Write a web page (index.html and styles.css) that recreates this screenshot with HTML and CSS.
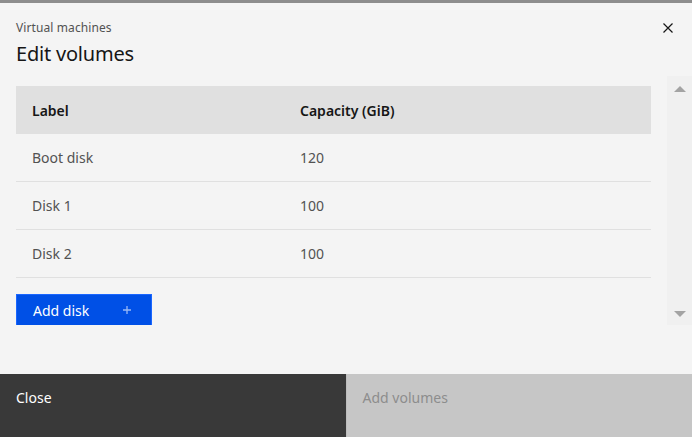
FILE: index.html
```html
<!DOCTYPE html>
<html lang="en">
<head>
<meta charset="utf-8">
<title>Edit volumes</title>
<link rel="stylesheet" href="styles.css">
</head>
<body>
<div class="modal">
  <div class="topbar"></div>
  <header class="modal-header">
    <div class="modal-label">Virtual machines</div>
    <h2 class="modal-title">Edit volumes</h2>
    <button class="close-btn" aria-label="Close">
      <svg width="16" height="16" viewBox="0 0 16 16"><path d="M3.5 3.5 L12.5 12.5 M12.5 3.5 L3.5 12.5" stroke="#161616" stroke-width="1.2" fill="none"/></svg>
    </button>
  </header>
  <div class="modal-body">
    <div class="content">
      <div class="table">
        <div class="row head"><div class="cell">Label</div><div class="cell">Capacity (GiB)</div></div>
        <div class="row"><div class="cell">Boot disk</div><div class="cell">120</div></div>
        <div class="row"><div class="cell">Disk 1</div><div class="cell">100</div></div>
        <div class="row"><div class="cell">Disk 2</div><div class="cell">100</div></div>
      </div>
      <button class="add-btn"><span>Add disk</span>
        <svg width="16" height="16" viewBox="0 0 16 16"><path d="M8 4 V12 M4 8 H12" stroke="#ffffff" stroke-opacity="0.6" stroke-width="1.3" fill="none"/></svg>
      </button>
    </div>
    <div class="scrollbar">
      <span class="arrow up"></span>
      <span class="arrow down"></span>
    </div>
  </div>
  <footer class="modal-footer">
    <button class="btn secondary">Close</button>
    <button class="btn disabled">Add volumes</button>
  </footer>
</div>
</body>
</html>
```
FILE: styles.css
```css
* { box-sizing: border-box; }
html, body { margin: 0; padding: 0; }
body {
  font-family: "Noto Sans", "Open Sans", sans-serif;
  background: #f4f4f4;
  color: #161616;
}
.modal {
  width: 692px;
  height: 437px;
  display: flex;
  flex-direction: column;
  background: #f4f4f4;
}
.topbar { height: 3px; background: #8d8d8d; flex: none; }
.modal-header {
  position: relative;
  padding: 17px 16px 0 16px;
  height: 73px;
  flex: none;
}
.modal-label {
  font-size: 12px;
  line-height: 16px;
  color: #525252;
  letter-spacing: 0.1px;
}
.modal-title {
  margin: 4px 0 0 0;
  font-size: 20px;
  line-height: 28px;
  font-weight: 400;
  letter-spacing: -0.2px;
  color: #161616;
}
.close-btn {
  position: absolute;
  right: 16px;
  top: 17px;
  width: 16px;
  height: 16px;
  border: none;
  padding: 0;
  background: transparent;
  display: flex;
}
.modal-body {
  display: flex;
  height: 249px;
  flex: none;
}
.content {
  flex: 1;
  padding: 10px 16px 0 16px;
  overflow: hidden;
}
.table {
  display: flex;
  flex-direction: column;
  font-size: 14px;
}
.row {
  display: grid;
  grid-template-columns: 268px 1fr;
  height: 48px;
  align-items: center;
  border-bottom: 1px solid #e0e0e0;
  color: #525252;
}
.row.head {
  background: #e0e0e0;
  border-bottom: none;
  font-weight: 600;
  color: #161616;
}
.cell { padding: 0 16px; }
.add-btn {
  margin-top: 16px;
  width: 136px;
  height: 32px;
  background: #0050e6;
  border: 1px solid #1a66ff;
  color: #ffffff;
  font-family: inherit;
  font-size: 14px;
  display: flex;
  align-items: center;
  justify-content: space-between;
  padding: 0 16px 0 16px;
}
.scrollbar {
  width: 25px;
  flex: none;
  background: #f0f0f0;
  position: relative;
}
.arrow {
  position: absolute;
  left: 7px;
  width: 0;
  height: 0;
  border-left: 6px solid transparent;
  border-right: 6px solid transparent;
}
.arrow.up { top: 10px; border-bottom: 6px solid #a3a3a3; }
.arrow.down { bottom: 8px; border-top: 6px solid #a3a3a3; }
.modal-footer {
  margin-top: auto;
  height: 63px;
  display: flex;
  flex: none;
}
.btn {
  flex: 1;
  border: none;
  font-family: inherit;
  font-size: 14px;
  text-align: left;
  padding: 14px 16px 0 16px;
  display: flex;
  align-items: flex-start;
}
.btn.secondary { background: #393939; color: #ffffff; }
.btn.disabled { background: #c6c6c6; color: #8d8d8d; border-left: 1px solid #bdbdbd; }
```
